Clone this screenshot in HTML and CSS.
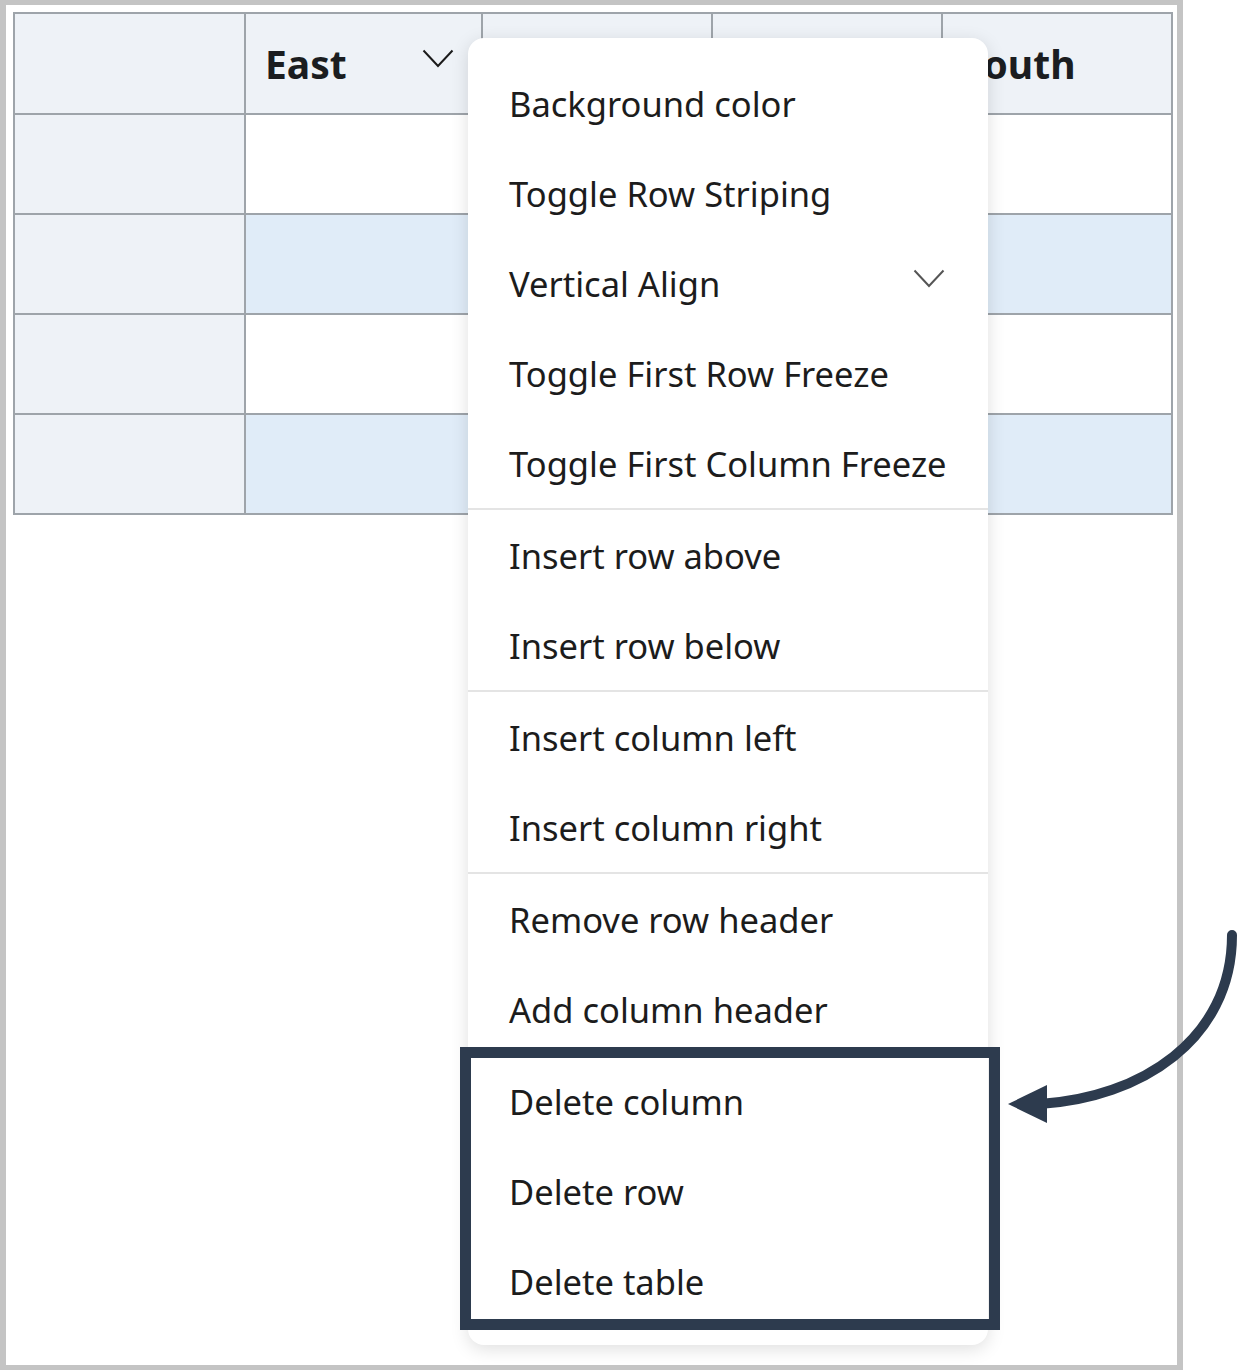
FILE: index.html
```html
<!DOCTYPE html>
<html>
<head>
<meta charset="utf-8">
<link rel="stylesheet" href="styles.css">
</head>
<body>
<div class="page">
  <div class="frame">
    <div class="grid">
      <div class="cell head"></div>
      <div class="cell head col"><span>East</span>
        <svg class="chev" width="32" height="19" viewBox="0 0 32 19"><path d="M1.5 1.5 L16 17 L30.5 1.5" fill="none" stroke="#1b1b1b" stroke-width="2"/></svg>
      </div>
      <div class="cell head"></div>
      <div class="cell head"></div>
      <div class="cell head col"><span>South</span></div>

      <div class="cell head"></div><div class="cell"></div><div class="cell"></div><div class="cell"></div><div class="cell"></div>
      <div class="cell head"></div><div class="cell stripe"></div><div class="cell stripe"></div><div class="cell stripe"></div><div class="cell stripe"></div>
      <div class="cell head"></div><div class="cell"></div><div class="cell"></div><div class="cell"></div><div class="cell"></div>
      <div class="cell head"></div><div class="cell stripe"></div><div class="cell stripe"></div><div class="cell stripe"></div><div class="cell stripe"></div>
    </div>
  </div>

  <div class="menu">
    <div class="group">
      <div class="item">Background color</div>
      <div class="item">Toggle Row Striping</div>
      <div class="item">Vertical Align
        <svg class="chev2" width="32" height="19" viewBox="0 0 32 19"><path d="M1.5 1.5 L16 17 L30.5 1.5" fill="none" stroke="#555" stroke-width="2"/></svg>
      </div>
      <div class="item">Toggle First Row Freeze</div>
      <div class="item">Toggle First Column Freeze</div>
    </div>
    <div class="group">
      <div class="item">Insert row above</div>
      <div class="item">Insert row below</div>
    </div>
    <div class="group">
      <div class="item">Insert column left</div>
      <div class="item">Insert column right</div>
    </div>
    <div class="group">
      <div class="item">Remove row header</div>
      <div class="item">Add column header</div>
    </div>
    <div class="group">
      <div class="item">Delete column</div>
      <div class="item">Delete row</div>
      <div class="item">Delete table</div>
    </div>
  </div>

  <div class="highlight"></div>

  <svg class="arrow" width="1239" height="1370" viewBox="0 0 1239 1370">
    <path d="M1232 935 C1232 1040 1140 1098 1040 1104" fill="none" stroke="#2d3b4e" stroke-width="10" stroke-linecap="round"/>
    <polygon points="1008,1104 1047,1085 1047,1123" fill="#2d3b4e"/>
  </svg>
</div>
</body>
</html>
```

FILE: styles.css
```css
* { box-sizing: border-box; }

body {
  margin: 0;
  background: #ffffff;
  font-family: "Noto Sans", "Open Sans", sans-serif;
}

.page {
  position: relative;
  width: 1239px;
  height: 1370px;
}

.frame {
  width: 1183px;
  height: 1370px;
  border: 5px solid #c4c4c4;
  border-left-width: 6px;
  border-right-width: 6px;
  padding: 7px 0 0 7px;
  background: #ffffff;
}

.grid {
  display: grid;
  grid-template-columns: 231px 237px 230px 230px 230px;
  grid-template-rows: 101px 100px 100px 100px 100px;
  width: 1160px;
  border-top: 2px solid #9ea4aa;
  border-left: 2px solid #9ea4aa;
}

.cell {
  border-right: 2px solid #9ea4aa;
  border-bottom: 2px solid #9ea4aa;
  background: #ffffff;
}

.cell.head {
  background: #eef2f7;
}

.cell.stripe {
  background: #e0ecf8;
}

.cell.col {
  display: flex;
  align-items: center;
  justify-content: space-between;
  padding: 0 27px 0 19px;
  font-weight: 700;
  font-size: 39px;
  color: #1b1d20;
}

.chev {
  margin-bottom: 10px;
}

.menu {
  position: absolute;
  left: 468px;
  top: 38px;
  width: 520px;
  background: #ffffff;
  border-radius: 16px;
  box-shadow: 0 4px 18px rgba(0, 0, 0, 0.13);
  padding: 20px 0 19px;
}

.group + .group {
  border-top: 2px solid #e4e4e4;
}

.item {
  height: 90px;
  display: flex;
  align-items: center;
  justify-content: space-between;
  padding: 0 43px 0 41px;
  font-size: 34.5px;
  color: #1c1c1c;
  white-space: nowrap;
}

.chev2 {
  margin-top: -10px;
}

.highlight {
  position: absolute;
  left: 460px;
  top: 1047px;
  width: 540px;
  height: 283px;
  border: 11px solid #2d3b4e;
}

.arrow {
  position: absolute;
  left: 0;
  top: 0;
  pointer-events: none;
}
```
